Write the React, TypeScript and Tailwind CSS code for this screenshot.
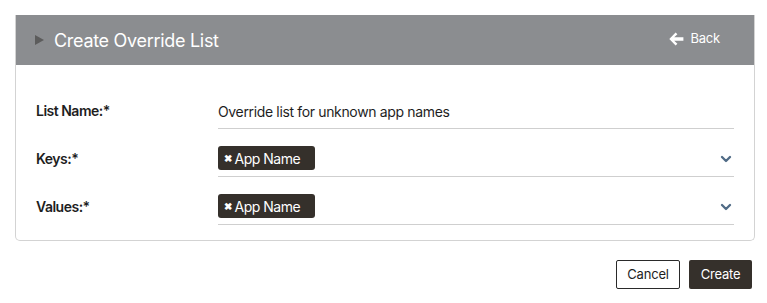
import { ChevronDown } from "lucide-react";

const rows = [
  { label: "List Name:*", kind: "text", value: "Override list for unknown app names" },
  { label: "Keys:*", kind: "chip", value: "App Name" },
  { label: "Values:*", kind: "chip", value: "App Name" },
];

export default function App() {
  return (
    <div
      className="min-h-[303px] w-[767px] bg-white pl-[15px] pr-[12px] pt-[15px] text-[#1e1e1e]"
      style={{ fontFamily: "Inter, 'Liberation Sans', sans-serif" }}
    >
      <div className="overflow-hidden rounded-b-[5px] border border-t-0 border-[#d3d3d3]">
        <div className="flex h-[50px] items-center justify-between bg-[#8b8d90] pl-[19px] pr-[34px]">
          <div className="flex items-center gap-[10px]">
            <svg width="9" height="10" viewBox="0 0 9 10" fill="#5c5c5c">
              <path d="M0 0 L9 5 L0 10 Z" />
            </svg>
            <span className="text-[18px] tracking-[-0.3px] text-white">Create Override List</span>
          </div>
          <div className="flex items-center gap-[6px] pb-[3px] text-[13px] tracking-[-0.2px] text-white">
            <svg width="15" height="14" viewBox="0 0 15 14" fill="white">
              <path d="M6.6 0.4 L8.4 2.2 L5.2 5.3 H14.4 V8.7 H5.2 L8.4 11.8 L6.6 13.6 L0.3 7 Z" />
            </svg>
            <span>Back</span>
          </div>
        </div>
        <div className="px-[20px] pb-[15px] pt-[16px]">
          {rows.map((row) => (
            <div key={row.label} className="flex h-12 items-end">
              <div className="w-[182px] pb-[8px] text-[14px] font-semibold leading-5 tracking-[-0.5px]">
                {row.label}
              </div>
              <div className="flex h-12 flex-1 items-end justify-between border-b border-[#cfcfcf] pb-[6px]">
                {row.kind === "text" ? (
                  <span className="text-[14px] leading-5 tracking-[-0.35px]">{row.value}</span>
                ) : (
                  <>
                    <span className="flex h-6 w-[97px] items-center gap-[3px] rounded-[3px] bg-[#35302b] pl-[6px] text-[14px] tracking-[-0.5px] text-white">
                      <span className="text-[10px] font-bold leading-none">✖</span>
                      {row.value}
                    </span>
                    <ChevronDown className="mb-[3px] h-4 w-4 text-[#506b86]" strokeWidth={3.5} />
                  </>
                )}
              </div>
            </div>
          ))}
        </div>
      </div>
      <div className="mt-[19px] flex justify-end gap-[9px] pr-[3px]">
        <button className="h-[29px] w-[64px] rounded-[2px] border border-[#2a2a2a] bg-white text-[13px] tracking-[-0.2px] text-[#1e1e1e]">
          Cancel
        </button>
        <button className="h-[29px] w-[63px] rounded-[2px] bg-[#35302b] text-[13px] tracking-[-0.2px] text-white">
          Create
        </button>
      </div>
    </div>
  );
}
